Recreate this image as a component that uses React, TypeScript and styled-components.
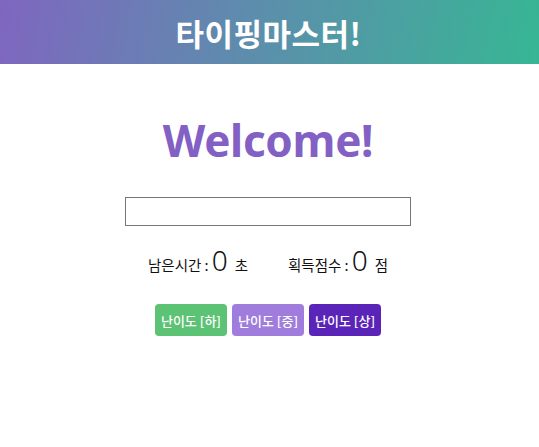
import React from "react";
import styled, { createGlobalStyle } from "styled-components";

const Global = createGlobalStyle`
  html, body { margin: 0; padding: 0; background: #fff; }
  body { font-family: "Noto Sans", "Noto Sans CJK KR", sans-serif; }
`;

const Header = styled.header`
  height: 64px;
  display: flex;
  align-items: center;
  justify-content: center;
  background: linear-gradient(100deg, #7f66c0 0%, #5e8cad 45%, #37b694 100%);
`;

const HeaderTitle = styled.h1`
  margin: 0 0 0 -2px;
  color: #fff;
  font-family: "Noto Sans CJK KR", sans-serif;
  font-size: 31px;
  font-weight: 700;
  letter-spacing: 0.5px;
`;

const Main = styled.main`
  display: flex;
  flex-direction: column;
  align-items: center;
  padding-top: 40px;
  margin-left: -3px;
`;

const Welcome = styled.h2`
  margin: 0;
  height: 72px;
  line-height: 72px;
  color: #8360c3;
  font-family: "Noto Sans", sans-serif;
  font-size: 44px;
  font-weight: 700;
  letter-spacing: -0.3px;
`;

const Input = styled.input`
  margin-top: 21px;
  width: 286px;
  height: 29px;
  box-sizing: border-box;
  border: 1px solid #767676;
  border-radius: 0;
  outline: none;
  padding: 0 4px;
`;

const Stats = styled.div`
  margin-top: 16px;
  display: flex;
  gap: 40px;
  align-items: baseline;
  font-family: "Noto Sans CJK KR", sans-serif;
  font-size: 14.5px;
  color: #111;
`;

const Stat = styled.span`
  display: inline-flex;
  align-items: baseline;
  white-space: pre;
`;

const Big = styled.span`
  font-family: "Noto Sans", sans-serif;
  font-size: 28px;
  font-weight: 300;
  margin: 0 7px 0 3px;
  line-height: 36px;
`;

const Buttons = styled.div`
  margin-top: 26px;
  display: flex;
  gap: 5px;
`;

const Btn = styled.button<{ $bg: string }>`
  height: 32px;
  padding: 0 6px;
  border: none;
  border-radius: 4px;
  background: ${(p) => p.$bg};
  color: #fff;
  font-family: "Noto Sans CJK KR", sans-serif;
  font-size: 13px;
  font-weight: 500;
  cursor: pointer;
`;

export default function App() {
  return (
    <>
      <Global />
      <Header>
        <HeaderTitle>타이핑마스터!</HeaderTitle>
      </Header>
      <Main>
        <Welcome>Welcome!</Welcome>
        <Input type="text" />
        <Stats>
          <Stat>
            {"남은시간 :"}<Big>0</Big>초
          </Stat>
          <Stat>
            {"획득점수 :"}<Big>0</Big>점
          </Stat>
        </Stats>
        <Buttons>
          <Btn $bg="#5cc274">난이도 [하]</Btn>
          <Btn $bg="#a07ddc">난이도 [중]</Btn>
          <Btn $bg="#5b24b9">난이도 [상]</Btn>
        </Buttons>
      </Main>
    </>
  );
}
